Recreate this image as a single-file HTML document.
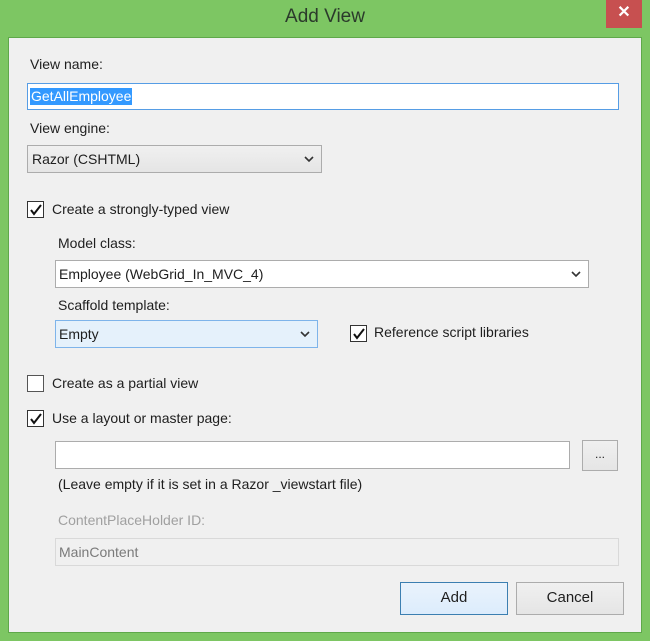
<!DOCTYPE html>
<html><head><style>
*{margin:0;padding:0;box-sizing:border-box}
body{width:650px;height:641px;background:#7dc663;position:relative;overflow:hidden;font-family:"Liberation Sans",sans-serif;font-size:14px;color:#1e1e1e}
.a{position:absolute;white-space:nowrap}
.client{position:absolute;left:8px;top:37px;width:634px;height:596px;background:#f0f0f0;border:1px solid #5fa84a}
.title{left:0;width:650px;top:6px;text-align:center;font-size:19px;color:#2b3a2b}
.close{left:606px;top:0;width:36px;height:28px;background:#c75050;color:#fff;text-align:center;font-size:16px;line-height:26px;font-weight:bold}
.box{position:absolute;border:1px solid #acacac;background:#fff}
.sel{background:linear-gradient(#f0f0f0,#e5e5e5)}
.cb{position:absolute;width:17px;height:17px;border:1px solid #333;background:#fff}
.cb svg{position:absolute;left:1px;top:1px}
.btn{position:absolute;border:1px solid #acacac;background:linear-gradient(#f0f0f0,#e5e5e5);text-align:center;line-height:30px;font-size:15px}
.arrow{position:absolute;right:6px;top:6px}
</style></head><body>
<div class="a title">Add View</div>
<div class="a close">✕</div>
<div class="client"></div>

<div class="a" style="left:30px;top:56px">View name:</div>
<div class="box" style="left:27px;top:83px;width:592px;height:27px;border-color:#569de5"><span class="a" style="left:2px;top:4px;background:#3399ff;color:#fff;padding:0 1px;line-height:17px">GetAllEmployee</span></div>

<div class="a" style="left:30px;top:120px">View engine:</div>
<div class="box sel" style="left:27px;top:145px;width:295px;height:28px"><span class="a" style="left:4px;top:5px">Razor (CSHTML)</span><svg class="arrow" width="12" height="14"><path d="M2 5l4 4 4-4" stroke="#333" stroke-width="1.6" fill="none"/></svg></div>

<div class="cb" style="left:27px;top:201px"><svg width="14" height="14"><path d="M2 7l3 4 7-9" stroke="#111" stroke-width="2" fill="none"/></svg></div>
<div class="a" style="left:52px;top:201px">Create a strongly-typed view</div>

<div class="a" style="left:58px;top:235px">Model class:</div>
<div class="box" style="left:55px;top:260px;width:534px;height:28px"><span class="a" style="left:3px;top:5px">Employee (WebGrid_In_MVC_4)</span><svg class="arrow" width="12" height="14"><path d="M2 5l4 4 4-4" stroke="#333" stroke-width="1.6" fill="none"/></svg></div>

<div class="a" style="left:58px;top:297px">Scaffold template:</div>
<div class="box" style="left:55px;top:320px;width:263px;height:28px;background:#e5f1fb;border-color:#7eb4ea"><span class="a" style="left:3px;top:5px">Empty</span><svg class="arrow" width="12" height="14"><path d="M2 5l4 4 4-4" stroke="#333" stroke-width="1.6" fill="none"/></svg></div>

<div class="cb" style="left:350px;top:325px"><svg width="14" height="14"><path d="M2 7l3 4 7-9" stroke="#111" stroke-width="2" fill="none"/></svg></div>
<div class="a" style="left:374px;top:324px">Reference script libraries</div>

<div class="cb" style="left:27px;top:375px;border-color:#555"></div>
<div class="a" style="left:52px;top:375px">Create as a partial view</div>

<div class="cb" style="left:27px;top:410px"><svg width="14" height="14"><path d="M2 7l3 4 7-9" stroke="#111" stroke-width="2" fill="none"/></svg></div>
<div class="a" style="left:52px;top:410px">Use a layout or master page:</div>

<div class="box" style="left:55px;top:441px;width:515px;height:28px"></div>
<div class="btn" style="left:582px;top:440px;width:36px;height:31px;line-height:26px;font-size:12px">...</div>

<div class="a" style="left:58px;top:476px">(Leave empty if it is set in a Razor _viewstart file)</div>
<div class="a" style="left:58px;top:512px;color:#a0a0a0">ContentPlaceHolder ID:</div>
<div class="box" style="left:55px;top:538px;width:564px;height:28px;border-color:#d9d9d9;background:#f0f0f0"><span class="a" style="left:3px;top:5px;color:#7a7a7a">MainContent</span></div>

<div class="btn" style="left:400px;top:582px;width:108px;height:33px;border-color:#3c7fb1;background:linear-gradient(#eaf3fc,#dcecfc)">Add</div>
<div class="btn" style="left:516px;top:582px;width:108px;height:33px">Cancel</div>
</body></html>
